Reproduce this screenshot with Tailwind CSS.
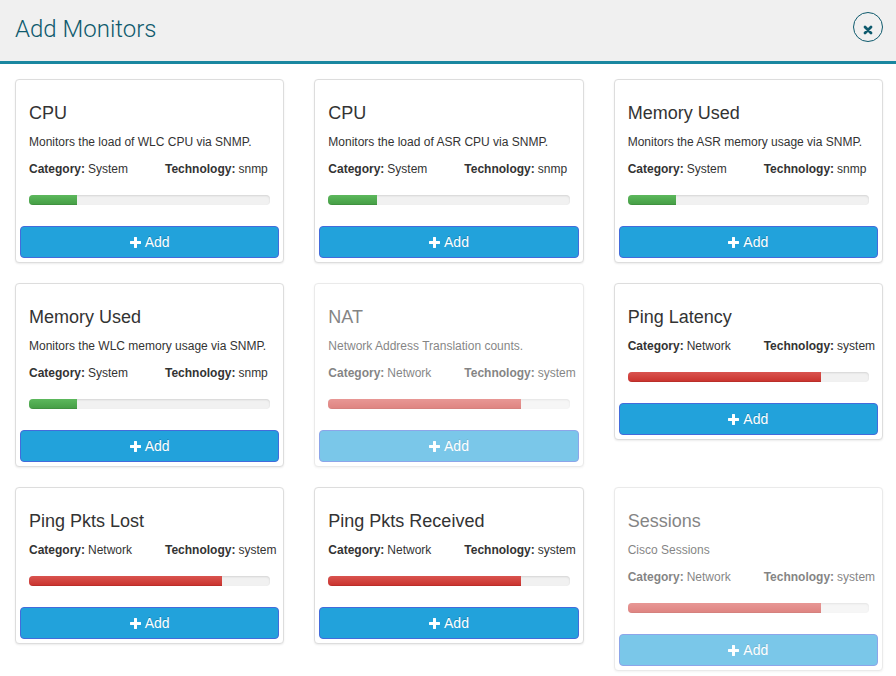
<!DOCTYPE html>
<html lang="en">
<head>
<meta charset="utf-8">
<meta name="viewport" content="width=device-width, initial-scale=1">
<title>Add Monitors</title>
<script src="https://cdn.jsdelivr.net/npm/@tailwindcss/browser@4"></script>
</head>
<body class="bg-white font-['Liberation_Sans',Arial,sans-serif] text-[#333333]">
<header class="flex items-start justify-between border-b-3 border-[#1b87a0] bg-[#f0f0f0] pt-3 pr-[13px] pb-[19px] pl-[15px]">
  <h1 class="pt-[2px] -mb-[2px] font-[Roboto,sans-serif] text-2xl leading-[30px] font-light text-[#0e5a6d]">Add Monitors</h1>
  <button type="button" aria-label="Close" class="flex size-[30px] items-center justify-center rounded-full border border-[#0e5a6d] pt-[6px] text-[#0e5a6d]">
    <svg class="size-[10px]" viewBox="0 0 10 10" fill="none" stroke="currentColor" stroke-width="2.8" stroke-linecap="round" aria-hidden="true"><path d="M2 2 8 8M8 2 2 8"/></svg>
  </button>
</header>
<main id="monitors" class="grid grid-cols-3 items-start gap-x-[30px] gap-y-5 pt-[15px] pr-[13px] pb-1 pl-[15px]"></main>

<template id="card">
  <article class="rounded border border-[#dddddd] bg-white p-1 shadow-[0_1px_2px_rgba(0,0,0,0.08)]">
    <div class="px-[9px] pt-[19px] pb-[21px]">
      <h2 class="mb-[10px] text-lg leading-5"></h2>
      <p class="mb-[9px] text-xs leading-[18px] whitespace-nowrap"></p>
      <dl class="mb-[17px] -mr-[9px] flex text-xs leading-[18px] whitespace-nowrap">
        <div class="flex shrink-0 basis-[136px] gap-[3px]"><dt class="font-bold">Category:</dt><dd data-field="category"></dd></div>
        <div class="flex gap-[3px]"><dt class="font-bold">Technology:</dt><dd data-field="technology"></dd></div>
      </dl>
      <div class="h-[10px] overflow-hidden rounded bg-[#f1f1f1] shadow-[inset_0_1px_2px_rgba(0,0,0,0.12)]">
        <div data-field="bar" class="h-full shadow-[inset_0_-1px_0_rgba(0,0,0,0.08)]"></div>
      </div>
    </div>
    <button type="button" class="flex h-8 w-full items-center justify-center gap-1 rounded border border-[#436bdb] bg-[#22a2db] text-sm text-white [text-shadow:0_-1px_0_rgba(0,0,0,0.2)]">
      <svg class="size-[11px]" viewBox="0 0 11 11" fill="currentColor" aria-hidden="true"><path d="M4.4 0h2.2q.4 0 .4.4V4h3.6q.4 0 .4.4v2.2q0 .4-.4.4H7v3.6q0 .4-.4.4H4.4q-.4 0-.4-.4V7H.4Q0 7 0 6.6V4.4Q0 4 .4 4H4V.4q0-.4.4-.4Z"/></svg>
      <span>Add</span>
    </button>
  </article>
</template>

<script>
const monitors = [
  ["CPU", "Monitors the load of WLC CPU via SNMP.", "System", "snmp", 20],
  ["CPU", "Monitors the load of ASR CPU via SNMP.", "System", "snmp", 20],
  ["Memory Used", "Monitors the ASR memory usage via SNMP.", "System", "snmp", 20],
  ["Memory Used", "Monitors the WLC memory usage via SNMP.", "System", "snmp", 20],
  ["NAT", "Network Address Translation counts.", "Network", "system", 80, true],
  ["Ping Latency", "", "Network", "system", 80],
  ["Ping Pkts Lost", "", "Network", "system", 80],
  ["Ping Pkts Received", "", "Network", "system", 80],
  ["Sessions", "Cisco Sessions", "Network", "system", 80, true]
];
const green = ["bg-linear-to-b", "from-[#5cb85c]", "to-[#449d44]"];
const red = ["bg-linear-to-b", "from-[#d9534f]", "to-[#c9302c]"];
for (const [title, text, category, technology, load, disabled] of monitors) {
  const card = document.getElementById("card").content.cloneNode(true);
  card.querySelector("h2").textContent = title;
  const p = card.querySelector("p");
  if (text) p.textContent = text; else p.remove();
  card.querySelector("[data-field=category]").textContent = category;
  card.querySelector("[data-field=technology]").textContent = technology;
  const bar = card.querySelector("[data-field=bar]");
  bar.style.width = load + "%";
  bar.classList.add(...(load > 50 ? red : green));
  if (disabled) {
    card.querySelector("article").classList.add("opacity-60");
    card.querySelector("button").disabled = true;
  }
  document.getElementById("monitors").append(card);
}
</script>
</body>
</html>
